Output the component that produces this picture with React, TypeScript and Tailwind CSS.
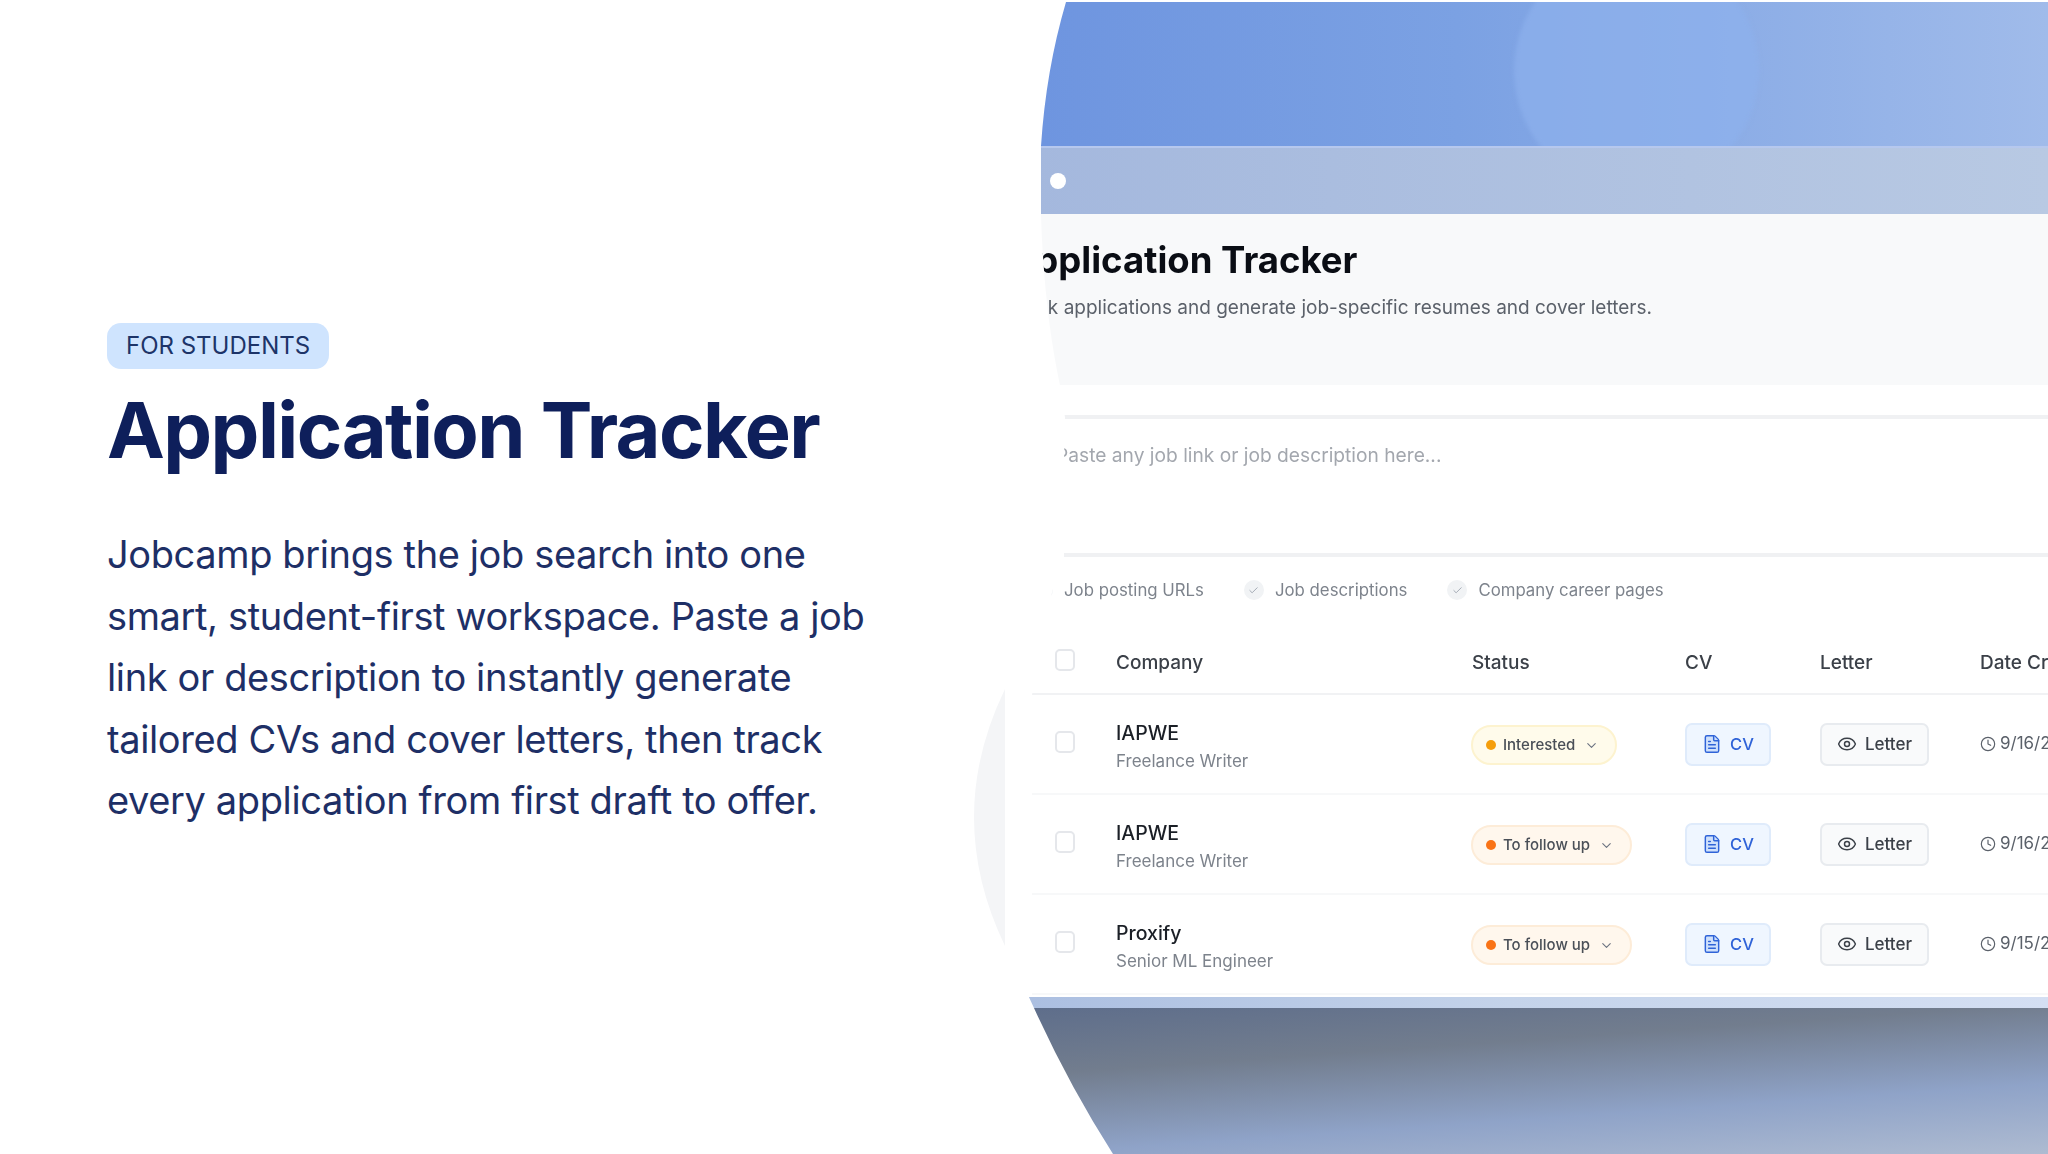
import { FC } from "react";
import { Check, ChevronDown, Clock, Eye, FileText } from "lucide-react";

interface RowProps {
    company: string;
    role: string;
    status: string;
    date: string;
    amber?: boolean;
}

const Row: FC<RowProps> = ({ company, role, status, date, amber }) => {
    return (
        <div className="ml-[58px] pl-[23px] h-[100px] grid grid-cols-[61px_356px_213px_135px_160px_1fr] items-center border-b-2 border-[#f7f8f9]">
            <div className="w-[20px] h-[22px] -mt-1 rounded-[5px] border-2 border-[#e5e7eb] bg-white"></div>
            <div className="mt-[5px]">
                <div className="text-[19.5px] leading-[28px] font-medium text-[#1b1f26]">{company}</div>
                <div className="text-[17px] leading-[28px] text-[#7d838c]">{role}</div>
            </div>
            <div className="-ml-px mt-[2px]">
                <div className={`inline-flex items-center h-[40px] pl-[13px] pr-[16px] gap-[7px] rounded-full border-2 text-[15px] font-medium text-[#4a4f57] ${amber ? "bg-[#fffbeb] border-[#fdf3cf]" : "bg-[#fff7ed] border-[#fdecd8]"}`}>
                    <span className={`w-[10px] h-[10px] rounded-full ${amber ? "bg-[#f59e0b]" : "bg-[#f97316]"}`}></span>
                    <span>{status}</span>
                    <ChevronDown size={15} strokeWidth={1.75} className="text-[#6b7280] ml-[2px]" />
                </div>
            </div>
            <div>
                <div className="inline-flex items-center justify-center w-[86px] h-[43px] gap-[8px] rounded-[7px] border-2 border-[#dfebfb] bg-[#eff6ff] text-[16.5px] font-medium text-[#2f63d8]">
                    <FileText size={20} strokeWidth={1.75} className="fill-[#cfe0fb]" />
                    <span>CV</span>
                </div>
            </div>
            <div>
                <div className="inline-flex items-center justify-center w-[109px] h-[43px] gap-[8px] rounded-[7px] border-2 border-[#e8ebef] bg-[#f9fafb] text-[17px] font-medium text-[#3b4048]">
                    <Eye size={20} strokeWidth={1.75} />
                    <span className="mt-[2px]">Letter</span>
                </div>
            </div>
            <div className="flex items-center gap-[4px] whitespace-nowrap text-[17px] text-[#5b616a]">
                <Clock size={16} strokeWidth={1.75} className="shrink-0" />
                <span>{date}</span>
            </div>
        </div>
    );
};

const Chip: FC<{ label: string }> = ({ label }) => {
    return (
        <div className="flex items-center gap-[11px]">
            <span className="flex items-center justify-center w-[20px] h-[20px] rounded-full bg-[#f1f3f5] text-[#9ca3af]">
                <Check size={11} strokeWidth={2} />
            </span>
            <span className="text-[16.8px] leading-[26px] text-[#7d838c]">{label}</span>
        </div>
    );
};

const App: FC = () => {
    return (
        <div className="flex w-[2048px] h-[1154px] overflow-hidden bg-white font-['Inter',sans-serif]">
            <div className="w-[974px] shrink-0 pl-[107px] pt-[323px]">
                <div className="inline-flex items-center h-[46px] px-[19px] rounded-[14px] bg-[#cfe4fe] text-[24px] text-[#1d3468] whitespace-nowrap">FOR STUDENTS</div>
                <h1 className="mt-[16px] text-[77.5px] leading-[90px] font-bold tracking-[-0.02em] text-[#0e1f5b] whitespace-nowrap">Application Tracker</h1>
                <p className="mt-[49px] text-[38px] leading-[61.6px] tracking-[-0.01em] text-[#1e2f66] whitespace-nowrap">
                    Jobcamp brings the job search into one<br />
                    smart, student-first workspace. Paste a job<br />
                    link or description to instantly generate<br />
                    tailored CVs and cover letters, then track<br />
                    every application from first draft to offer.
                </p>
            </div>

            <div className="relative w-[1074px] shrink-0">
                <svg className="absolute left-0 top-[689px]" width="31" height="257" viewBox="0 0 31 257">
                    <path d="M31 0 Q-31 128 31 257 Z" fill="#f4f5f7" />
                </svg>

                <div className="relative flex flex-col h-[1154px] blur-[0.7px] [clip-path:path('M92_2_Q72_70_67_146_L67_214_Q70_310_86_385_L91_417_L88_555_L76_600_L58_695_L54_995_L60_1008_Q95_1085_139_1154_L1074_1154_L1074_2_Z')]">
                    <div className="relative h-[146px] overflow-hidden bg-[linear-gradient(90deg,#6c93df,#7ba1e3_45%,#a0bbea)]">
                        <div className="absolute left-[540px] top-[-52px] w-[245px] h-[245px] rounded-full bg-[#8db0ec]/70 blur-[2px]"></div>
                    </div>
                    <div className="flex items-center h-[68px] pl-[76px] border-t-2 border-[#b6c8ee] bg-[linear-gradient(90deg,#a3b7dd,#b8c9e3)]">
                        <span className="w-[16px] h-[16px] rounded-full bg-white"></span>
                    </div>
                    <div className="h-[171px] pl-[34px] pt-[26px] bg-[#f8f9fa]">
                        <div className="text-[36.5px] leading-[40px] font-bold text-[#0a0d14] whitespace-nowrap">Application Tracker</div>
                        <div className="mt-[15px] text-[19px] leading-[26px] text-[#5b616a] whitespace-nowrap">Track applications and generate job-specific resumes and cover letters.</div>
                    </div>
                    <div className="mt-[30px] ml-[90px] h-[142px] pt-[23px] border-y-4 border-[#f0f1f3]">
                        <div className="-ml-2 text-[19.2px] leading-[26px] text-[#a3a7ae] whitespace-nowrap">Paste any job link or job description here...</div>
                    </div>
                    <div className="mt-[20px] pl-[59px] flex items-center gap-10 whitespace-nowrap">
                        <Chip label="Job posting URLs" />
                        <Chip label="Job descriptions" />
                        <Chip label="Company career pages" />
                    </div>
                    <div className="mt-[28px] ml-[58px] pl-[23px] h-[64px] grid grid-cols-[61px_356px_213px_135px_160px_1fr] items-center border-b-2 border-[#f1f2f4] text-[19px] font-medium text-[#3b4048] whitespace-nowrap">
                        <div className="w-[20px] h-[22px] -mt-[4px] rounded-[5px] border-2 border-[#e5e7eb] bg-white"></div>
                        <div className="mt-[3px]">Company</div>
                        <div className="mt-[3px]">Status</div>
                        <div className="mt-[3px]">CV</div>
                        <div className="mt-[3px]">Letter</div>
                        <div className="mt-[3px]">Date Created</div>
                    </div>
                    <Row company="IAPWE" role="Freelance Writer" status="Interested" date="9/16/2025" amber />
                    <Row company="IAPWE" role="Freelance Writer" status="To follow up" date="9/16/2025" />
                    <Row company="Proxify" role="Senior ML Engineer" status="To follow up" date="9/15/2025" />
                    <div className="mt-[2px] h-[11px] bg-[linear-gradient(90deg,#a9bde0,#c4d3ea_50%,#d4dff3)]"></div>
                    <div className="h-[146px] bg-[linear-gradient(176deg,#5d6d8b_0%,#727d8e_32%,#8fa3c8_68%,#aebbd1_100%)]"></div>
                </div>
            </div>
        </div>
    );
};

export default App;
